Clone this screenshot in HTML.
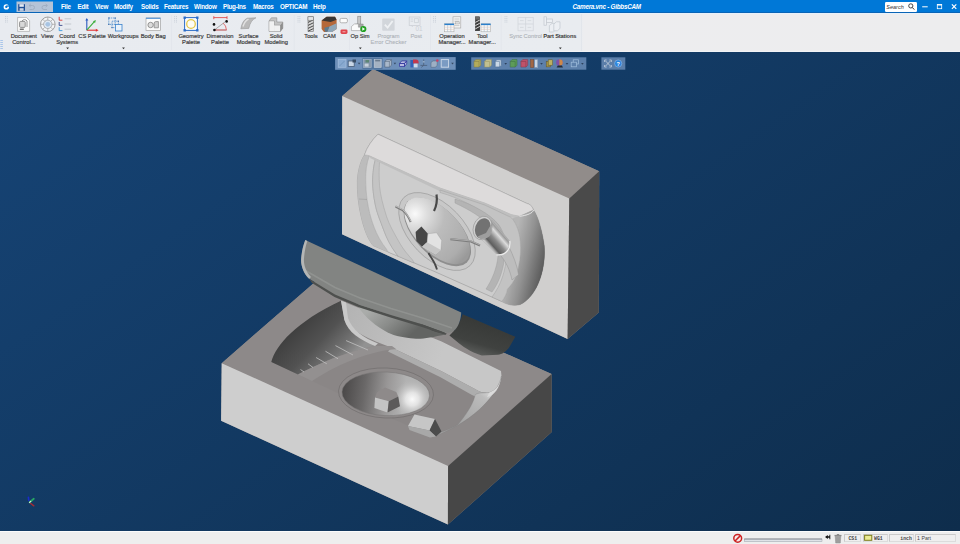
<!DOCTYPE html>
<html><head><meta charset="utf-8"><title>Camera.vnc - GibbsCAM</title>
<style>
html,body{margin:0;padding:0;width:960px;height:544px;overflow:hidden;background:#123a6a;font-family:"Liberation Sans",sans-serif;}
#title{position:absolute;left:0;top:0;width:960px;height:13px;background:linear-gradient(#0078d7 0,#0078d7 12.2px,#0a64b6 12.300px,#0a64b6 13px);color:#fff;font-size:6.3px;line-height:13px;}
#tb{position:absolute;left:0;top:13px;width:960px;height:38.5px;background:linear-gradient(90deg,#e8ebf0 0,#e9ecf0 580px,#ededef 584px,#ededee 100%);font-size:5.75px;color:#3c3c3c;line-height:6.4px;border-top:1.200px solid #e6f1fb;border-bottom:0.6px solid #f1f3f6;box-sizing:border-box;}
#sb{position:absolute;left:0;top:530.7px;width:960px;height:13.3px;background:#eeeeee;border-top:1px solid #fbfbfb;box-sizing:border-box;font-size:5px;color:#333;}
.m{position:absolute;top:0;white-space:nowrap;font-weight:bold;letter-spacing:-0.25px;}
.l{position:absolute;top:18.6px;width:60px;margin-left:-30px;text-align:center;white-space:nowrap;-webkit-text-stroke:0.18px #3c3c3c;}
.g{color:#aeb2b8;-webkit-text-stroke:0.1px #aeb2b8;}
.b{font-weight:bold;-webkit-text-stroke:0;letter-spacing:-0.2px;}
svg.ov{position:absolute;left:0;top:0;width:960px;height:544px;}
.s{position:absolute;top:2.2px;height:8.6px;box-sizing:border-box;border:0.6px solid #dcdcdc;border-top-color:#cacaca;border-left-color:#cacaca;background:#efefef;line-height:7.6px;white-space:nowrap;font-family:"Liberation Mono","Liberation Sans",monospace;font-weight:bold;font-size:4.8px;color:#444;}
</style></head><body>
<svg class="ov" viewBox="0 0 960 544">
<defs>
<linearGradient id="bg" x1="0" y1="52" x2="531" y2="825" gradientUnits="userSpaceOnUse"><stop offset="0" stop-color="#164476"/><stop offset="1" stop-color="#0e2d4c"/></linearGradient>
</defs>
<rect x="0" y="51" width="960" height="481" fill="url(#bg)"/>
<defs>
<linearGradient id="gWallL" x1="290" y1="322" x2="340" y2="370" gradientUnits="userSpaceOnUse"><stop offset="0" stop-color="#3a3a3a"/><stop offset="0.500" stop-color="#525252"/><stop offset="0.800" stop-color="#727272"/><stop offset="1" stop-color="#929292"/></linearGradient><linearGradient id="gLedge" x1="345" y1="320" x2="440" y2="360" gradientUnits="userSpaceOnUse"><stop offset="0" stop-color="#b4b4b4"/><stop offset="1" stop-color="#c7c7c7"/></linearGradient>
<radialGradient id="gDishU" cx="409" cy="235" r="66" gradientUnits="userSpaceOnUse"><stop offset="0" stop-color="#fafafa"/><stop offset="0.180" stop-color="#dedede"/><stop offset="0.450" stop-color="#bcbcbc"/><stop offset="0.850" stop-color="#adadad"/><stop offset="1" stop-color="#9a9a9a"/></radialGradient>
<radialGradient id="gDishL" cx="416" cy="400" r="62" gradientUnits="userSpaceOnUse"><stop offset="0" stop-color="#f2f2f2"/><stop offset="0.3" stop-color="#b4b4b4"/><stop offset="0.7" stop-color="#8a8a8a"/><stop offset="1" stop-color="#6e6e6e"/></radialGradient>
<linearGradient id="gCavR" x1="515" y1="230" x2="548" y2="245" gradientUnits="userSpaceOnUse"><stop offset="0" stop-color="#b8b8b8"/><stop offset="0.5" stop-color="#8e8e8e"/><stop offset="1" stop-color="#646464"/></linearGradient>
<linearGradient id="gCoverIn" x1="480" y1="322" x2="470" y2="356" gradientUnits="userSpaceOnUse"><stop offset="0" stop-color="#383a38"/><stop offset="0.6" stop-color="#404240"/><stop offset="1" stop-color="#626462"/></linearGradient>
<radialGradient id="gDome" cx="392" cy="322" r="48" gradientUnits="userSpaceOnUse"><stop offset="0" stop-color="#a6a8a8"/><stop offset="0.6" stop-color="#808282"/><stop offset="1" stop-color="#5c5e5e"/></radialGradient>
<linearGradient id="gCyl" x1="487" y1="243" x2="502" y2="228" gradientUnits="userSpaceOnUse"><stop offset="0" stop-color="#707070"/><stop offset="0.450" stop-color="#eaeaea"/><stop offset="0.750" stop-color="#a4a4a4"/><stop offset="1" stop-color="#8a8a8a"/></linearGradient>
</defs>
<!-- lower block -->
<path d="M221.7,363.2 L325.4,273 L551.6,374 L551.8,432 L447.9,524.6 L221.1,420.8 Z" fill="#8d8989"/>
<path d="M221.7,363.2 L325.4,273 L551.6,374 L448.1,466 Z" fill="#8d8989"/>
<path d="M221.7,363.2 L448.1,466 L447.9,524.6 L221.1,420.8 Z" fill="#cecece"/>
<path d="M448.1,466 L551.6,374 L551.8,432 L447.9,524.6 Z" fill="#474747"/>
<!-- lower cavity floor -->
<path d="M271.3,362 C276,345 296,322 341,300.8 L441.6,341.5 L501,371 L501.5,376 C497,397 470,424 432,437 Z" fill="#8a8686"/>
<!-- ledge (light) at the back -->
<path d="M341,300.8 L441.6,341.5 L501,371 L501.5,376 C500.500,384 496,390.500 489.400,392.500 C484,393.500 479,391.500 475,389 L441.600,371.300 L391.500,347.500 C370,340 350,330 344.4,320 Z" fill="url(#gLedge)"/>
<path d="M489.400,392.500 C484,393.500 479,391.500 475,389 L441.600,371.300 L391.500,347.500 L388,351.500 L440,377 L472,395 C478,398 483,398.500 487,397 Z" fill="#adadad"/>
<!-- dark left wall -->
<path d="M271.3,362 C276,345 296,322 341,300.8 L344.4,320 C348,332 360,340 375,346 C345,352 318,364 298,374.4 Z" fill="url(#gWallL)"/>
<path d="M341,300.8 L346,302.5 L348,318 C352,330 364,338 378,343.5 L375,346 C360,340 348,332 344.4,320 Z" fill="#c9c9c9"/>
<!-- band below wall -->
<path d="M298,374.4 C318,364 345,352 375,346 L392,346 L396,349 C365,352 335,366 312,381 Z" fill="#939090"/>
<g stroke="#c2c2c2" stroke-width="0.800" fill="none"><path d="M346.100,340.600 L368,350"/><path d="M335.500,345.600 L353,355"/><path d="M325.500,351.250 L338,358.750"/><path d="M316.100,357.500 L326.750,363.750"/><path d="M308,363.750 L313,367.500"/><path d="M300.500,369.500 L304,372"/></g>
<!-- right wall of lower cavity -->
<linearGradient id="gRW" x1="490" y1="388" x2="462" y2="424" gradientUnits="userSpaceOnUse"><stop offset="0" stop-color="#e2e2e2"/><stop offset="0.250" stop-color="#bcbcbc"/><stop offset="1" stop-color="#a4a4a4"/></linearGradient><path d="M501.5,376 C500.500,384 496,390.500 489.400,392.500 C484,393.500 479,392 475.100,394.800 C474,401 470,410 458,424.500 C454,427 448,430 440,432.500 L432,437 C470,424 497,397 501.5,376 Z" fill="url(#gRW)" stroke="#7c7a7a" stroke-width="0.300"/><path d="M489.400,392.500 C496,390.500 500.500,384 501.500,376 C500,388 494,396 487,397 Z" fill="#dadada"/>
<!-- dish -->
<linearGradient id="gBowl" x1="342" y1="392" x2="404" y2="398" gradientUnits="userSpaceOnUse"><stop offset="0" stop-color="#4a4848"/><stop offset="0.350" stop-color="#6a6868"/><stop offset="0.700" stop-color="#989696"/><stop offset="1" stop-color="#b2b2b2"/></linearGradient>
<radialGradient id="gBowlH" cx="412.500" cy="398" r="19" gradientUnits="userSpaceOnUse"><stop offset="0" stop-color="#fafafa"/><stop offset="0.350" stop-color="#ececec" stop-opacity="0.850"/><stop offset="1" stop-color="#c0c0c0" stop-opacity="0"/></radialGradient>
<g transform="rotate(2.500 386 393)"><ellipse cx="386" cy="393" rx="47.500" ry="25" fill="#8d8989" stroke="#6c6a6a" stroke-width="0.600"/><ellipse cx="385.800" cy="393.800" rx="43.800" ry="21.800" fill="url(#gBowl)" stroke="#747272" stroke-width="0.500"/><ellipse cx="385.800" cy="393.800" rx="43.800" ry="21.800" fill="url(#gBowlH)"/></g>
<!-- hex boss -->
<path d="M376.900,392.500 L385,387.500 L396.250,392 L398.200,396.500 L388.750,401.250 L375,397.500 Z" fill="#8e8a8a"/>
<path d="M375,397.500 L388.750,401.250 L387.500,412.500 L374.400,408 Z" fill="#c4c4c4"/>
<path d="M388.750,401.250 L398.200,396.500 L400,406.250 L387.500,412.500 Z" fill="#5c5a5a"/>
<!-- small block -->
<path d="M408,426 L414.500,414.500 L435,419 L441.500,431.500 L436,436.500 L429,436 Z" fill="#8a8a8a"/>
<path d="M408,426 L414.500,414.500 L435,419 L429.500,430.500 Z" fill="#c6c6c6"/>
<path d="M429.500,430.500 L435,419 L441.500,431.500 L436,436.500 Z" fill="#4c4c4c"/>
<path d="M408,426 L429.500,430.500 L436,436.500 L430,437.500 L409.500,430 Z" fill="#a8a8a8"/>
<!-- upper block -->
<path d="M342.2,96 L373,69.3 L599.2,171.2 L598.8,312.5 L567.6,339 L342,234.3 Z" fill="#918c8a"/>
<path d="M342.2,96 L373,69.3 L599.2,171.2 L569.3,198.6 Z" fill="#918c8a"/>
<path d="M342.2,96 L569.3,198.6 L567.6,339 L342,234.3 Z" fill="#d0cfce"/>
<path d="M569.3,198.6 L599.2,171.2 L598.8,312.5 L567.6,339 Z" fill="#4a4a4a"/>
<!-- upper cavity -->
<path d="M378,134.2 L526.5,203.3 C530,204 532,206 533.5,210 C538,216 542.5,232 544.3,246 C546,268 538,296 520.3,304.500 C513,306.500 506,304 501.900,301.500 L434,271.300 L373,245.500 C368,239 364.3,229.8 361.500,218 C358.5,206 357,192 357.4,180.2 C358,170 361,160 364.3,155.3 C367,147 372,140 378,134.2 Z" fill="#cdcdcd" stroke="#8c8c8c" stroke-width="0.5"/>
<!-- left crescent bands -->
<path d="M369.400,155.800 C366.500,163 365.500,172 365.700,180.200 C365.800,187 366.200,193 367,199.500 C368.500,209 370.500,218 374,227 C377,235 381.500,243 386.400,249 L388,252 L373,245.500 C368,239 364.3,229.8 361.500,218 C358.5,206 357,192 357.4,180.2 C358,170 361,160 364.3,155.3 Z" fill="#bcbcbc"/>
<path d="M369.400,155.800 C366.500,163 365.500,172 365.700,180.200 C365.800,187 366.200,193 367,199.500 C368.500,209 370.500,218 374,227 C377,235 381.500,243 386.400,249 L388,252 L398,256.200 L396,253.300 C390.500,246 386.500,238 383.600,229.800 C380,220 376.500,212 375.300,205 C373.500,196 372.500,188 372.600,180 C372.800,172 373.800,165 375.300,159.500 Z" fill="#d3d3d3" stroke="#9a9a9a" stroke-width="0.400"/>
<path d="M375.300,159.500 C373.800,165 372.800,172 372.600,180 C372.500,188 373.500,196 375.300,205 C376.500,212 380,220 383.600,229.800 C386.500,238 390.500,246 396,253.300 L398,256.200 L414,263 L412.600,260 C407.500,254.500 403.500,249.500 400,243.600 C394,233 389,224.500 386.400,216 C383,205 380.500,196 379.500,185.700 C379,177 379,169 379.500,162.200 Z" fill="#c4c4c4" stroke="#9a9a9a" stroke-width="0.400"/>
<path d="M358.800,199 L367,199.500" stroke="#909090" stroke-width="0.400"/>
<!-- top ledge -->
<path d="M378,134.2 L526.5,203.3 C530,204 532,206 533.5,210 L519.5,216.3 L511.2,214.6 L484.7,203 L440,188 L369.4,155.8 C367,155 365,155 364.3,155.3 C367,147 372,140 378,134.2 Z" fill="#dddbdb" stroke="#9a9a9a" stroke-width="0.4"/>
<path d="M369.400,155.800 L440,188 L484.700,203 L511.200,214.600 L519.500,216.300 L518.500,218.800 L510.500,217.200 L484,205.800 L439.500,191 L370.500,158.200 Z" fill="#bfbfbf"/>
<!-- right wall -->
<linearGradient id="gWR" x1="512" y1="250" x2="546" y2="258" gradientUnits="userSpaceOnUse"><stop offset="0" stop-color="#b6b6b6"/><stop offset="0.450" stop-color="#929292"/><stop offset="1" stop-color="#5a5a5a"/></linearGradient>
<linearGradient id="gWR2" x1="520" y1="260" x2="512" y2="306" gradientUnits="userSpaceOnUse"><stop offset="0" stop-color="#a0a0a0" stop-opacity="0"/><stop offset="1" stop-color="#b4b4b4" stop-opacity="0.900"/></linearGradient>
<path id="wr" d="M533.5,210 C538,216 542.5,232 544.3,246 C546,268 538,296 520.3,304.500 C513,306.500 506,304 501.900,301.500 C505,297 507,293 507.400,289.200 C514,282 517.500,275 518.400,267.200 C520.500,258 521,250 520.300,241.400 C519.500,232 516.500,224 512.200,218.600 L519.500,216.300 Z" fill="url(#gWR)"/>
<use href="#wr" fill="url(#gWR2)"/>
<path d="M533.5,210 C533,213 527,215.500 519.500,216.300" fill="none" stroke="#e4e4e4" stroke-width="1"/>
<!-- channel region right of dish -->
<path d="M440,190 L484.700,205 L510.500,217.200 L512.200,218.600 C516.500,224 519.500,232 520.300,241.400 C521,250 520.500,258 518.400,267.200 C517.500,275 514,282 507.400,289.200 C507,293 505,297 501.900,301.500 L492,297 C501,285 506,270 506.500,255 C507,240 503,228 495,221 C480,209 460,198 440,192.500 Z" fill="#c3c3c3" stroke="#9a9a9a" stroke-width="0.400"/>
<path d="M455,199 C472,204 490,214 498,224 C504,232 506,245 504.500,258 C503,272 498,284 492,292 L486,289 C492,280 497,268 498,256 C499,244 497,234 491,227 C483,218 470,210 455,203 Z" fill="#b4b4b4" stroke="#9a9a9a" stroke-width="0.400"/>
<!-- dish -->
<g transform="rotate(46 437 231.500)"><ellipse cx="437" cy="231.500" rx="47.500" ry="27" fill="#c8c8c8" stroke="#8a8a8a" stroke-width="0.5"/><ellipse cx="437.500" cy="231.500" rx="42.500" ry="22.500" fill="#8e8e8e"/><ellipse cx="436.500" cy="230.800" rx="41.500" ry="21.800" fill="url(#gDishU)"/></g>
<path d="M415.6,231.9 L421.4,226.5 L427.9,233.7 L427.1,242.2 L422.2,246.8 L416.4,241.1 Z" fill="#464646"/>
<path d="M427.9,233.7 L436.6,232.8 L441.7,240.4 L440.9,249.9 L435.6,254.6 L422.2,246.8 L427.1,242.2 Z" fill="#e2e2e2" stroke="#8a8a8a" stroke-width="0.300"/>
<path d="M427.1,242.2 L440.9,249.9 L435.6,254.6 L422.2,246.8 Z" fill="#c6c6c6"/>
<g fill="none" stroke-linecap="butt"><path d="M436.5,194.5 C437.5,201 436.5,206 434,211" stroke="#484848" stroke-width="2.2"/><path d="M428.5,253 C431,258 435,262 437,269.5" stroke="#484848" stroke-width="1.8"/><path d="M395.5,206.5 L402.4,210 C406,213 409,218 410.7,222" stroke="#7e7e7e" stroke-width="2"/><path d="M395.800,206 L402.600,209.500 C406,212.500 409.200,217.500 411,221.500" stroke="#c4c4c4" stroke-width="0.900"/><path d="M450.4,239.2 L471,241.5 L480,245.5" stroke="#7c7c7c" stroke-width="2.200"/><path d="M450.400,238.800 L471,241 L480,245" stroke="#b0b0b0" stroke-width="0.900"/></g>
<!-- round hole + half pipe -->
<linearGradient id="gPipe" x1="488" y1="246" x2="504" y2="232" gradientUnits="userSpaceOnUse"><stop offset="0" stop-color="#e6e6e6"/><stop offset="0.180" stop-color="#5e5e5e"/><stop offset="0.450" stop-color="#8a8a8a"/><stop offset="0.700" stop-color="#dcdcdc"/><stop offset="0.850" stop-color="#9a9a9a"/><stop offset="1" stop-color="#e0e0e0"/></linearGradient>
<path d="M500,254.500 L509,247 C513,255 517,265 518.600,274.700 L512,280 C510,270 506,262 500,254.500 Z" fill="#bdbdbd" stroke="#8c8c8c" stroke-width="0.400"/>
<path d="M478.500,236 L492,220.500 L509.500,241 C510.500,249 505,255.500 497,254.500 Z" fill="url(#gPipe)" stroke="#8a8a8a" stroke-width="0.400"/>
<path d="M496.500,254.800 C505,256 511,249.500 509.800,240.800" fill="none" stroke="#ececec" stroke-width="1.300"/>
<g transform="rotate(18 482.600 228)"><ellipse cx="482.600" cy="228" rx="9.300" ry="12" fill="#cfcfcf" stroke="#8a8a8a" stroke-width="0.500"/><ellipse cx="482.900" cy="228.300" rx="7.600" ry="10.300" fill="#727272"/></g>
<path d="M477.500,236.500 C481,240 487,239.500 490.500,235 L492.500,222 L486,233 Z" fill="#9e9e9e"/>
<!-- cover: dome below -->
<linearGradient id="gDome2" x1="375" y1="305" x2="405" y2="340" gradientUnits="userSpaceOnUse"><stop offset="0" stop-color="#aaacaa"/><stop offset="0.500" stop-color="#8a8c8a"/><stop offset="1" stop-color="#626462"/></linearGradient>
<path d="M356,303 C362,314 370,322 385,331 C392,335 400,337.500 416,338.750 C424,339 432,337.500 447,334 L434,327 L391,313 Z" fill="url(#gDome2)"/>
<path d="M418,322 C424,326 430,330 436,332 L447,334 L434,327 Z" fill="#4a4c4a"/>
<!-- cover inner dark -->
<path d="M462.6,314.3 L515.3,336.8 L509.7,346.6 C506,352 502,354.5 498,354.7 L481.8,355.4 C470,352 462,346 456.8,341.5 L449.4,335.6 C456,330 460,322 462.6,314.3 Z" fill="url(#gCoverIn)"/>
<!-- cover main -->
<path d="M305.3,240.1 L461.2,312.6 C461,320 458,327 455.3,329.5 C452,332.5 448,333 445,332.8 L422.500,324.500 L391,315 L360,305 L335,294.500 L309.1,278.7 C303,273 300.5,264 301.2,258.2 C301.8,252 303,246 305.3,240.1 Z" fill="#828482"/>
<path d="M309.1,278.7 L335,294.500 L360,305 L391,315 L422.500,324.500 L445,332.8 L446,335 L422,327 L390.500,317.500 L359.500,307.500 L334.500,297 L312,283 Z" fill="#4e504e"/>
<path d="M304.500,270 L335,287.500 L360,298 L391,308.500 L422.500,318 L452,328" fill="none" stroke="#969896" stroke-width="1.600" opacity="0.700"/>
<path d="M305.3,240.1 C303,246 301.8,252 301.2,258.2 C300.5,264 303,273 309.1,278.7 L311,277 C305.5,271 303.5,264 304,258.5 C304.5,252 305.5,246.5 307.3,241 Z" fill="#b4b6b6"/>

<!-- floating toolbars -->
<g>
<rect x="335.1" y="57.1" width="120.6" height="12.7" fill="#6d8fb9"/>
<rect x="362.4" y="57.8" width="20.2" height="11.3" fill="#54769e"/><g opacity="0.800">
<rect x="338.2" y="59.3" width="7.8" height="8" fill="#8fb0d6" stroke="#b4cbe6" stroke-width="0.7"/>
<path d="M339.5,66 l5,-5" stroke="#6d8fb9" stroke-width="0.8"/>
<rect x="348.2" y="61" width="6" height="5.5" fill="#dfe8f2" stroke="#3c4f66" stroke-width="0.8"/><rect x="352.5" y="59.5" width="3.5" height="3" fill="#2c3c50"/>
<path d="M357.8,62.8 h2.6 l-1.3,1.8z" fill="#2a3a50"/>
<rect x="363.6" y="59.6" width="7.6" height="7.8" fill="#8f9fae" stroke="#c5d0da" stroke-width="0.6"/><rect x="364.6" y="63.6" width="4" height="3" fill="#e4e8ec"/><rect x="365.5" y="60" width="3.5" height="2.5" fill="#5f8a6a"/>
<rect x="374.2" y="59.6" width="7" height="7.8" fill="#b9c2cc" stroke="#e1e6ec" stroke-width="0.6"/><rect x="375.2" y="59.8" width="5" height="1.6" fill="#6f7c8a"/>
<path d="M384.8,61.5 l2,-1.8 h4.6 v5.6 l-2,1.8 h-4.6z" fill="#b9c4d0" stroke="#4a5868" stroke-width="0.6"/><path d="M384.8,61.5 h4.6 v5.6 M389.4,61.5 l2,-1.8" fill="none" stroke="#4a5868" stroke-width="0.5"/>
<path d="M393.6,62.8 h2.6 l-1.3,1.8z" fill="#2a3a50"/>
<path d="M399.5,63.5 l2.2,-2.6 h5 l-2.2,2.6z M399.5,63.5 h5 v3 h-5z M404.5,63.500 l2.2,-2.6 v3 l-2.2,2.6z" fill="#c9c4ea" stroke="#2a2a9a" stroke-width="0.8"/>
<path d="M410.4,60 h4 v7.4 h-4z" fill="#2458b8"/><path d="M413,59.4 h3 a2.6,2.6 0 0 1 2.6,2.6 v1.6 h-5.6z" fill="#d82434"/><path d="M413.6,63.6 h4 v3.8 h-4z" fill="#e9eef6"/>
<path d="M423.7,59.4 v6 M420.4,65.4 h6.8 M423.7,65.400 l-2.4,2" stroke="#44546a" stroke-width="0.8" fill="none"/><rect x="422.7" y="61" width="2" height="1.6" fill="#9ab0c8"/>
<path d="M431,62.5 l2,-1.600 h4.200 v4.600 l-2,1.800 h-4.200z" fill="#aab8c8" stroke="#56667a" stroke-width="0.6"/><circle cx="437.300" cy="60.6" r="1.3" fill="#e03050"/>
<rect x="441.2" y="59.6" width="7.400" height="7.600" fill="#7f9fc6" stroke="#e8eef6" stroke-width="0.9"/>
<path d="M451.2,62.8 h2.6 l-1.3,1.8z" fill="#2a3a50"/></g>
</g>
<g>
<rect x="471.2" y="57.3" width="115.100" height="12.4" fill="#5d80ab"/><g opacity="0.800">
<path d="M474,61.5 l1.800,-1.900 h5 v5.600 l-1.800,1.900 h-5z" fill="#c9b848" stroke="#8a7c2c" stroke-width="0.5"/><path d="M474,61.5 h5 v5.600 M479,61.500 l1.800,-1.900" fill="none" stroke="#8a7c2c" stroke-width="0.5"/>
<path d="M484.600,61.5 l1.800,-1.900 h5 v5.600 l-1.800,1.900 h-5z" fill="#dcd08a" stroke="#a89a4c" stroke-width="0.5"/><path d="M484.600,61.5 h5 v5.600" fill="none" stroke="#a89a4c" stroke-width="0.5"/>
<path d="M495.200,61.5 l1.600,-1.700 h4.400 v5.400 l-1.600,1.700 h-4.400z" fill="#e6eef6" stroke="#4a6a8e" stroke-width="0.6"/><path d="M495.200,61.5 h4.400 v5.400" fill="none" stroke="#4a6a8e" stroke-width="0.5"/>
<path d="M504.400,62.900 h2.600 l-1.300,1.800z" fill="#22324a"/>
<path d="M510.200,61.5 l1.800,-1.900 h5 v5.600 l-1.800,1.900 h-5z" fill="#5da444" stroke="#356a26" stroke-width="0.5"/><path d="M510.200,61.5 h5 v5.600" fill="none" stroke="#356a26" stroke-width="0.5"/>
<path d="M520.900,61.5 l1.800,-1.900 h5 v5.600 l-1.800,1.900 h-5z" fill="#d8485a" stroke="#8e2434" stroke-width="0.5"/><path d="M520.900,61.500 h5 v5.600" fill="none" stroke="#8e2434" stroke-width="0.5"/>
<rect x="530.4" y="59.4" width="3.400" height="8.200" fill="#b4622c" stroke="#6e3814" stroke-width="0.4"/><rect x="534.6" y="59.4" width="3.200" height="8.200" fill="#e4ecf4" stroke="#6a7e96" stroke-width="0.4"/>
<path d="M540.200,62.900 h2.600 l-1.300,1.800z" fill="#22324a"/>
<rect x="546.2" y="61.500" width="4.400" height="5.400" fill="#b8982c" stroke="#5e4c10" stroke-width="0.500"/><rect x="548.200" y="59.800" width="4.400" height="5.400" fill="#d6bc50" stroke="#5e4c10" stroke-width="0.500"/>
<circle cx="559.400" cy="62.600" r="3.300" fill="#8a46a8"/><path d="M559.400,59.300 a3.300,3.300 0 0 1 0,6.600z" fill="#e88a30"/><path d="M556.600,67.600 h6.400 l-1.200,-2 h-4z" fill="#15181c"/>
<path d="M565.700,62.900 h2.600 l-1.300,1.800z" fill="#22324a"/>
<rect x="573.200" y="59.800" width="5.200" height="4.200" fill="#5d80ab" stroke="#b4d0ec" stroke-width="0.700"/><rect x="571.200" y="62.200" width="5.200" height="4.600" fill="#5d80ab" stroke="#b4d0ec" stroke-width="0.700"/>
<path d="M581.100,62.900 h2.600 l-1.300,1.800z" fill="#22324a"/></g>
</g>
<g>
<rect x="601.4" y="57.300" width="23.900" height="12.400" fill="#5b7ea9"/>
<path d="M604.600,60 h2 M604.600,60 v2 M611.400,60 h-2 M611.400,60 v2 M604.600,67 h2 M604.600,67 v-2 M611.400,67 h-2 M611.400,67 v-2 M605.600,61 l4.800,5 M610.400,61 l-4.800,5" stroke="#c6d2de" stroke-width="0.8" fill="none"/>
<circle cx="618.200" cy="63.500" r="3.600" fill="#2a82dc" stroke="#9cc4ee" stroke-width="0.500"/>
<text x="618.200" y="65.600" style="font-family:'Liberation Sans',sans-serif" font-size="5.600" font-weight="bold" fill="#fff" text-anchor="middle">?</text>
</g>
<!-- axis triad -->
<g stroke-linecap="round"><path d="M30.200,503 L33.800,505.800" stroke="#a02c36" stroke-width="1.500"/><path d="M28.800,500.500 L28.400,497.400" stroke="#1a2ccc" stroke-width="1.600"/><path d="M29.600,502.300 L33.800,498.800" stroke="#27a566" stroke-width="1.800"/><path d="M29.500,502.400 L30.800,501.300" stroke="#d8eee2" stroke-width="1.100"/></g>

</svg>
<div id="title">
<span class="m" style="left:61px">File</span><span class="m" style="left:77.5px">Edit</span><span class="m" style="left:95px">View</span><span class="m" style="left:114px">Modify</span><span class="m" style="left:141px">Solids</span><span class="m" style="left:164px">Features</span><span class="m" style="left:194px">Window</span><span class="m" style="left:223px">Plug-Ins</span><span class="m" style="left:253px">Macros</span><span class="m" style="left:280px">OPTICAM</span><span class="m" style="left:313px">Help</span>
<span class="m" style="left:572.5px;font-style:italic">Camera.vnc - GibbsCAM</span>
<span style="position:absolute;left:884.7px;top:1.6px;width:32.3px;height:10.1px;background:#fff;border-radius:1.2px;"></span>
<span style="position:absolute;left:886.3px;top:1.6px;line-height:10.1px;font-size:5.5px;font-style:italic;color:#333;">Search</span>

</div>
<div id="tb">
<span class="l" style="left:23.8px">Document<br>Control...</span>
<span class="l" style="left:47.3px">View</span>
<span class="l" style="left:67.2px">Coord<br>Systems</span>
<span class="l" style="left:92px">CS Palette</span>
<span class="l" style="left:123.2px">Workgroups</span>
<span class="l" style="left:153.2px">Body Bag</span>
<span class="l" style="left:191px">Geometry<br>Palette</span>
<span class="l" style="left:220px">Dimension<br>Palette</span>
<span class="l" style="left:248.5px">Surface<br>Modeling</span>
<span class="l" style="left:276.2px">Solid<br>Modeling</span>
<span class="l" style="left:311px">Tools</span>
<span class="l" style="left:329.3px">CAM</span>
<span class="l" style="left:360px">Op Sim</span>
<span class="l g" style="left:388.5px">Program<br>Error Checker</span>
<span class="l g" style="left:416.2px">Post</span>
<span class="l" style="left:452px">Operation<br>Manager...</span>
<span class="l" style="left:482.2px">Tool<br>Manager...</span>
<span class="l g" style="left:525.7px">Sync Control</span>
<span class="l b" style="left:559.8px">Part Stations</span>

</div>
<div id="sb">
<span class="s" style="left:844.3px;width:17px;text-align:center">CS1</span>
<span class="s" style="left:862.5px;width:25.5px;padding-left:10.5px">WG1</span>
<span class="s" style="left:889.3px;width:24.5px;padding-left:10px">inch</span>
<span class="s" style="left:914.5px;width:41.8px;padding-left:1.6px;font-family:'Liberation Sans',sans-serif;font-weight:normal;font-size:5.2px">1 Part</span>

</div>
<svg class="ov" viewBox="0 0 960 544" style="pointer-events:none">
<!-- title bar -->
<circle cx="6.300" cy="6.900" r="2.700" fill="#fff"/><circle cx="6.300" cy="6.900" r="1.150" fill="#0078d7"/><rect x="6.300" y="5.400" width="3" height="1.300" fill="#0078d7"/>
<rect x="16.500" y="1.500" width="36.500" height="10.500" fill="#b4c3d7"/>
<rect x="18.200" y="4.200" width="6.800" height="6.600" fill="#1f4f96"/><rect x="19.400" y="4.200" width="4.400" height="2.600" fill="#e6ecf4"/><rect x="19.600" y="8.200" width="4" height="2.600" fill="#c8d4e4"/>
<path d="M29.500,9.500 h3 a2,2 0 0 0 0,-4 h-3.200 M30.800,3.900 l-1.700,1.600 l1.700,1.600" fill="none" stroke="#9dacbf" stroke-width="0.9"/>
<path d="M47,9.500 h-3 a2,2 0 0 1 0,-4 h3.200 M45.700,3.900 l1.700,1.600 l-1.700,1.600" fill="none" stroke="#9dacbf" stroke-width="0.9"/>
<circle cx="910.800" cy="5.900" r="2.100" fill="none" stroke="#333" stroke-width="0.9"/><path d="M912.300,7.500 l2,2.100" stroke="#333" stroke-width="1"/>
<rect x="922.200" y="6.300" width="5.500" height="1" fill="#fff"/>
<rect x="937.300" y="4.500" width="4.400" height="4.200" fill="none" stroke="#fff" stroke-width="0.800"/><rect x="937.300" y="4.300" width="4.400" height="1.200" fill="#fff"/>
<path d="M951.900,4.400 l4.400,4.400 M956.300,4.400 l-4.400,4.400" stroke="#fff" stroke-width="1.200"/>
<!-- toolbar grips and separators -->
<g fill="#c3cad4">
<g id="grip"><rect x="5" y="16.200" width="0.900" height="0.900"/><rect x="6.800" y="16.200" width="0.900" height="0.900"/><rect x="5" y="18" width="0.900" height="0.900"/><rect x="6.800" y="18" width="0.900" height="0.900"/><rect x="5" y="19.800" width="0.900" height="0.900"/><rect x="6.800" y="19.800" width="0.900" height="0.900"/><rect x="5" y="21.600" width="0.900" height="0.900"/><rect x="6.800" y="21.600" width="0.900" height="0.900"/></g>
<use href="#grip" x="169.200"/><use href="#grip" x="292.600"/><use href="#grip" x="428.200"/><use href="#grip" x="499.600"/>
</g>
<g fill="#dfe3e9"><rect x="171.400" y="15" width="0.600" height="35"/><rect x="293.800" y="15" width="0.600" height="35"/><rect x="349.200" y="15" width="0.600" height="35"/><rect x="430" y="15" width="0.600" height="35"/><rect x="500.800" y="15" width="0.600" height="35"/><rect x="581" y="14" width="0.700" height="37"/></g>
<g fill="#a9c6ea"><rect x="0.300" y="40" width="2.600" height="1"/><rect x="0.300" y="42" width="2.600" height="1"/><rect x="0.300" y="44" width="2.600" height="1"/><rect x="0.300" y="46" width="2.600" height="1"/><rect x="0.300" y="48" width="2.600" height="1"/></g>
<!-- dropdown arrows -->
<g fill="#333"><path d="M66.200,47.600 h2.800 l-1.400,1.700z"/><path d="M122.100,47.600 h2.800 l-1.400,1.700z"/><path d="M358.900,47.600 h2.800 l-1.400,1.700z"/><path d="M558.900,47.600 h2.800 l-1.400,1.700z"/></g>
<!-- Document Control -->
<path d="M17.600,17.400 h8.800 l3.200,3.200 v10.800 h-12z" fill="#fbfbfb" stroke="#9a9a9a" stroke-width="0.600"/>
<rect x="19.600" y="21.400" width="5.600" height="6" rx="1" fill="#d8d8d8" stroke="#7a7a7a" stroke-width="0.800"/><path d="M22,21 a3,3 0 0 1 5,0 v6" fill="none" stroke="#8a8a8a" stroke-width="0.900"/><rect x="19.800" y="28.600" width="4" height="1.200" fill="#555"/>
<!-- View -->
<circle cx="47.800" cy="24.300" r="7.300" fill="#f4f5f7" stroke="#8e8e8e" stroke-width="0.800"/>
<circle cx="47.800" cy="24.300" r="4.200" fill="#dfe9f4" stroke="#9a9a9a" stroke-width="0.700"/><circle cx="47.800" cy="24.300" r="2.400" fill="#a8c4e2"/>
<g stroke="#9a9a9a" stroke-width="0.700"><path d="M47.800,17 v3.100 M47.800,28.500 v3.100 M40.500,24.300 h3.100 M52,24.300 h3.100 M42.600,19.100 l2.200,2.200 M50.800,27.300 l2.200,2.200 M53,19.100 l-2.200,2.200 M44.800,27.300 l-2.200,2.200"/></g>
<!-- Coord Systems -->
<g fill="none" stroke-width="0.900"><path d="M59.200,16.800 v3.400 h3.200" stroke="#d83a3a"/><path d="M59.200,22 v3.400 h3.200" stroke="#3a4a8a"/><path d="M59.200,27.200 v3.400 h3.200" stroke="#3a9ae0"/></g>
<g stroke="#c0c4ca" stroke-width="0.900"><path d="M64.600,18.800 h6.600 M64.600,24 h6.600 M64.600,29.200 h6.600"/></g>
<!-- CS Palette -->
<path d="M86.800,30.200 V19.400" stroke="#2a5ac0" stroke-width="1.100"/><path d="M85.300,20.600 l1.500,-2.600 l1.500,2.600z" fill="#2a5ac0"/>
<path d="M86.800,30.200 H96.600" stroke="#e03030" stroke-width="1.100"/><path d="M95.800,28.700 l2.800,1.500 l-2.800,1.500z" fill="#e03030"/>
<path d="M86.800,30.200 L94.600,21.400" stroke="#3cae3c" stroke-width="1.100"/><path d="M93,21.200 l2.900,-1.200 l-0.800,3z" fill="#3cae3c"/>
<!-- Workgroups -->
<g fill="none" stroke="#3a82cc" stroke-width="0.700" stroke-dasharray="1.400 0.700"><rect x="108.800" y="18" width="6.400" height="6.400"/><rect x="112" y="21.200" width="6.400" height="6.400"/></g>
<rect x="115.400" y="24.400" width="6.600" height="6.600" fill="#e9f2fb" stroke="#3a82cc" stroke-width="0.800"/>
<g fill="#3a6aa8"><rect x="108.200" y="17.400" width="1.200" height="1.200"/><rect x="114.600" y="17.400" width="1.200" height="1.200"/><rect x="108.200" y="23.800" width="1.200" height="1.200"/><rect x="117.800" y="20.600" width="1.200" height="1.200"/><rect x="111.400" y="27" width="1.200" height="1.200"/></g>
<!-- Body Bag -->
<rect x="146" y="18" width="14.400" height="12.600" fill="#fbfbfb" stroke="#a4a4a4" stroke-width="0.700"/><rect x="146" y="17.700" width="14.400" height="1.100" fill="#4a90d8"/>
<circle cx="150.600" cy="25" r="2.700" fill="#dcdcdc" stroke="#8a8a8a" stroke-width="0.900"/><path d="M154.200,27.800 v-4.600 a1.600,1.600 0 0 1 1.600,-1.600 h2.600 v6.200z" fill="#d0d0d0" stroke="#8a8a8a" stroke-width="0.800"/>
<!-- Geometry Palette -->
<rect x="184.600" y="17.600" width="12.800" height="12.800" fill="#fafcfe" stroke="#2a6cc8" stroke-width="1"/>
<circle cx="191" cy="24" r="4.300" fill="#fdfcf4" stroke="#e4c84a" stroke-width="1.300"/>
<g fill="#2a6cc8"><rect x="183.500" y="16.500" width="2.400" height="2.400"/><rect x="196.100" y="16.500" width="2.400" height="2.400"/><rect x="183.500" y="29.100" width="2.400" height="2.400"/><rect x="196.100" y="29.100" width="2.400" height="2.400"/></g>
<!-- Dimension Palette -->
<path d="M213.800,16.200 v3 M227,16.200 v3 M213.800,17.600 h13.200" stroke="#e03a3a" stroke-width="0.800" fill="none"/>
<path d="M214.400,30 L225.400,21.600 M214.400,30 H226.600" stroke="#8a8a8a" stroke-width="0.700"/><path d="M214.400,30 H226.600 M223.200,23.200 q3,2.400 3.200,6.600" stroke="#e03a3a" stroke-width="0.700" fill="none"/>
<circle cx="214" cy="24.400" r="1.300" fill="#111"/><circle cx="226.600" cy="21.400" r="1.300" fill="#111"/><circle cx="214.400" cy="30" r="1.300" fill="#111"/>
<!-- Surface Modeling -->
<path d="M240.800,28.800 q1.400,-8.400 6.400,-10.600 l8.800,-0.400 q-5.400,2.200 -7.200,10.600z" fill="#b9b9b9" stroke="#8e8e8e" stroke-width="0.500"/><path d="M243,26.500 q1.800,-6 5.600,-7.400" stroke="#e2e2e2" stroke-width="1.400" fill="none"/>
<!-- Solid Modeling -->
<path d="M269,21 l2.400,-3.200 h5.400 v4.200 h6 v6.200 l-2.400,3.200 h-11.400z" fill="#c4c4c4" stroke="#8e8e8e" stroke-width="0.600"/><path d="M269,21 h5.400 v4.200 h6 v6.200" fill="none" stroke="#8e8e8e" stroke-width="0.600"/><rect x="269.300" y="21.300" width="4.800" height="9.800" fill="#f1f1f1"/><rect x="274.100" y="25.500" width="6" height="5.600" fill="#f1f1f1"/><path d="M280.400,25.200 l2.400,-3.200 v6.200 l-2.400,3.200z" fill="#8e8e8e"/>
<!-- Tools -->
<rect x="308" y="16.800" width="5.400" height="14.600" fill="#d6d6d6" stroke="#6e6e6e" stroke-width="0.600"/><path d="M308,22.400 l5.400,-2.600 M308,25.400 l5.400,-2.600 M308,28.400 l5.400,-2.600 M308,31.200 l5.400,-2.600" stroke="#4a4a4a" stroke-width="1"/><rect x="308" y="16.800" width="5.400" height="3.400" fill="#e6e6e6" stroke="#6e6e6e" stroke-width="0.500"/>
<!-- CAM -->
<path d="M321.600,20.400 l5,-3.600 h8.400 l1.600,3 v9.200 l-4.600,3 h-8l-2.400,-3z" fill="#b5683a"/><path d="M321.600,20.400 l5,-3.600 h8.400 l1.600,3 l-6,2.200z" fill="#3a3634"/><path d="M329.400,26.600 l7.200,-3.400 v5.800 l-4.600,3 h-5z" fill="#8ea6b8"/><path d="M324.400,27.800 l5,-1.200 l-2,5.200 h-2.400z" fill="#5a7a90"/>
<rect x="340" y="18.400" width="7.400" height="4.400" rx="1.400" fill="#fbfbfb" stroke="#9a9a9a" stroke-width="0.700"/>
<rect x="340.500" y="29.400" width="7" height="4.600" rx="1.400" fill="#e0444c"/><path d="M342.500,31.800 h3" stroke="#f6d0d2" stroke-width="0.800"/>
<!-- Op Sim -->
<rect x="357.800" y="16.200" width="3" height="9.600" fill="#c8c8c8" stroke="#7a7a7a" stroke-width="0.500"/><path d="M355.400,24 h7.800 v3.200 h-7.800z" fill="#a8a8a8" stroke="#7a7a7a" stroke-width="0.400"/>
<path d="M351.400,26.600 l3,-2.600 h4 v3.200 h6.200 v3.400 h-13.200z" fill="#fbfbfb" stroke="#9a9a9a" stroke-width="0.600"/>
<circle cx="363.300" cy="29" r="3.100" fill="#22a022"/><path d="M362.300,27.300 l2.700,1.700 l-2.700,1.700z" fill="#fff"/>
<!-- Program Error Checker -->
<rect x="382.200" y="18.400" width="12.400" height="12.400" rx="1" fill="#d2d6db"/><path d="M384.800,24.600 l2.800,3 l5,-6.600" stroke="#eef0f3" stroke-width="1.800" fill="none"/>
<!-- Post -->
<g fill="none" stroke="#ccd0d6" stroke-width="0.800"><rect x="409.200" y="17" width="10.800" height="8.400"/><path d="M410.600,19 h2.400 M410.600,21.200 h2.400 M414.400,18.600 h4 v4 h-4z M411.400,25.600 l1.400,1.400"/></g>
<text x="415.400" y="31.400" style="font-family:'Liberation Sans',sans-serif" font-size="6.400" fill="#ccd0d6">01</text>
<!-- Operation Manager -->
<rect x="453" y="16.800" width="7.800" height="11.200" fill="#f4f4f4" stroke="#a2a2a2" stroke-width="0.600"/><path d="M454.400,19 h5 M454.400,21.200 h5 M454.400,23.400 h5 M454.400,25.600 h5" stroke="#b8b8b8" stroke-width="0.700"/><rect x="455.600" y="21.800" width="3.600" height="2.200" fill="#dcdcdc" stroke="#9a9a9a" stroke-width="0.400"/>
<rect x="444.400" y="23.800" width="9.600" height="8" fill="#f8f8f8" stroke="#a2a2a2" stroke-width="0.500"/><rect x="444.400" y="23.600" width="9.600" height="1.500" fill="#2c80cc"/><path d="M447.600,25 v6.800 M450.800,25 v6.800" stroke="#a8bcd2" stroke-width="0.600"/><path d="M444.400,27.200 h9.600 M444.400,29.400 h9.600" stroke="#e0c4b4" stroke-width="0.500"/>
<!-- Tool Manager -->
<rect x="475.400" y="16.800" width="4.400" height="14" fill="#3c3c3c" stroke="#222" stroke-width="0.400"/><path d="M475.400,22.400 l4.400,-2.400 M475.400,25.600 l4.400,-2.400 M475.400,28.800 l4.400,-2.400" stroke="#dcdcdc" stroke-width="1"/><rect x="475.400" y="16.800" width="4.400" height="2.800" fill="#6a6a6a"/>
<rect x="481" y="23.800" width="9.700" height="8" fill="#f8f8f8" stroke="#a2a2a2" stroke-width="0.500"/><rect x="481" y="23.600" width="9.700" height="1.500" fill="#2c80cc"/><path d="M484.200,25 v6.800 M487.400,25 v6.800" stroke="#a8bcd2" stroke-width="0.600"/><path d="M481,27.200 h9.700 M481,29.400 h9.700" stroke="#e0c4b4" stroke-width="0.500"/>
<!-- Sync Control -->
<g fill="none" stroke="#d0d4da" stroke-width="0.700"><rect x="518" y="17.400" width="15.200" height="13.400"/><path d="M518,24 h15.200 M525.600,17.400 v13.400 M520,20.600 h3.600 M527.600,20.600 h3.600 M520,27.400 h3.600 M527.600,27.400 h3.600"/></g>
<!-- Part Stations -->
<g fill="#eceff3" stroke="#c2c7ce" stroke-width="0.700"><rect x="544" y="16.800" width="2.400" height="8.400"/><rect x="546.400" y="19" width="6" height="3.400"/><path d="M549.400,25.600 l2.600,-2.200 h3.800 v6.400 l-2.600,2.200 h-3.800z"/><path d="M553.800,24.200 l2.600,-2.400 h3.600 v6.600 l-2.600,2.400 h-3.600z"/></g>
<!-- status bar -->
<circle cx="737.700" cy="538.300" r="3.900" fill="#f6eaea" stroke="#cc2222" stroke-width="1.500"/><path d="M735,541 l5.400,-5.400" stroke="#cc2222" stroke-width="1.500"/>
<rect x="744.300" y="539" width="77.700" height="2.600" fill="#dfe3e8" stroke="#9aa0a8" stroke-width="0.500"/><path d="M744.300,539 h77.700" stroke="#5a6068" stroke-width="0.600"/>
<path d="M825,537 l2.800,-2 v1.300 h1.600 v-1.600 h0.900 v4.600 h-0.900 v-1.600 h-1.600 v1.300z" fill="#111"/>
<path d="M835.200,536.200 h5.600 l-0.500,6.800 h-4.600z" fill="#a9a9a9" stroke="#777" stroke-width="0.400"/><rect x="834.500" y="534.900" width="7" height="1.300" fill="#8c8c8c"/><rect x="836.800" y="534" width="2.400" height="1" fill="#8c8c8c"/><path d="M837,537.200 v5 M839,537.200 v5" stroke="#7c7c7c" stroke-width="0.500"/>
<rect x="864.600" y="535.300" width="7.200" height="5" fill="#ecec94" stroke="#7e7e1c" stroke-width="1"/>

</svg>
</body></html>
